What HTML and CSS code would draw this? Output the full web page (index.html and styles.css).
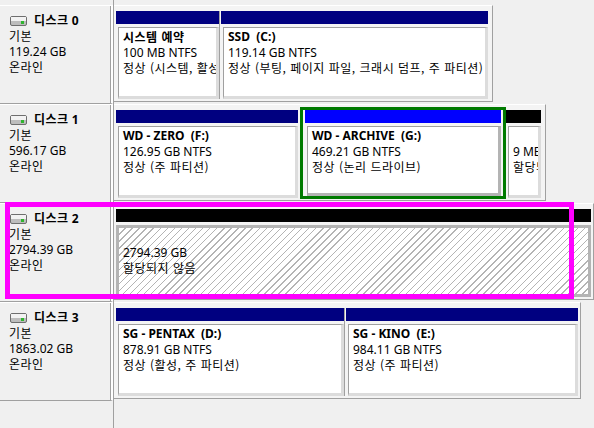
FILE: index.html
```html
<!DOCTYPE html>
<html lang="ko">
<head>
  <meta charset="UTF-8">
  <title>디스크 관리</title>
  <link rel="stylesheet" href="styles.css">
</head>
<body>
  <svg width="0" height="0" class="defs">
    <symbol id="disk-icon" viewBox="0 0 17 10">
      <rect x="0.5" y="0.5" width="16" height="9" rx="1.5" fill="#bdbdbd" stroke="#6e6e6e"/>
      <rect x="1" y="1" width="15" height="4" fill="#f2f2f2"/>
      <rect x="11" y="5" width="3" height="3" fill="#2fb52f"/>
    </symbol>
  </svg>

  <div class="disk-list">

    <!-- 디스크 0 -->
    <div class="disk">
      <div class="disk-info">
        <div class="disk-name"><svg class="disk-icon"><use href="#disk-icon"/></svg><span class="ko">디스크</span> 0</div>
        <div class="ko">기본</div>
        <div>119.24 GB</div>
        <div class="ko">온라인</div>
      </div>
      <div class="volumes wide-end">
        <div class="volume" style="width: 103px">
          <div class="volume-bar primary"></div>
          <div class="volume-body">
            <div class="volume-name ko">시스템 예약</div>
            <div>100 MB NTFS</div>
            <div class="ko">정상 (시스템, 활성, 주 파티션)</div>
          </div>
        </div>
        <div class="volume" style="width: 267px">
          <div class="volume-bar primary"></div>
          <div class="volume-body">
            <div class="volume-name">SSD  (C:)</div>
            <div>119.14 GB NTFS</div>
            <div class="ko">정상 (부팅, 페이지 파일, 크래시 덤프, 주 파티션)</div>
          </div>
        </div>
      </div>
    </div>

    <!-- 디스크 1 -->
    <div class="disk">
      <div class="disk-info">
        <div class="disk-name"><svg class="disk-icon"><use href="#disk-icon"/></svg><span class="ko">디스크</span> 1</div>
        <div class="ko">기본</div>
        <div>596.17 GB</div>
        <div class="ko">온라인</div>
      </div>
      <div class="volumes wide-end">
        <div class="volume" style="width: 182px">
          <div class="volume-bar primary"></div>
          <div class="volume-body">
            <div class="volume-name">WD - ZERO  (F:)</div>
            <div>126.95 GB NTFS</div>
            <div class="ko">정상 (주 파티션)</div>
          </div>
        </div>
        <div class="volume selected" style="width: 206px">
          <div class="volume-bar logical"></div>
          <div class="volume-body">
            <div class="volume-name">WD - ARCHIVE  (G:)</div>
            <div>469.21 GB NTFS</div>
            <div class="ko">정상 (논리 드라이브)</div>
          </div>
        </div>
        <div class="volume" style="width: 35px">
          <div class="volume-bar free"></div>
          <div class="volume-body">
            <div class="volume-name"> </div>
            <div>9 MB</div>
            <div class="ko">할당되지 않음</div>
          </div>
        </div>
      </div>
    </div>

    <!-- 디스크 2 -->
    <div class="disk">
      <div class="disk-info">
        <div class="disk-name"><svg class="disk-icon"><use href="#disk-icon"/></svg><span class="ko">디스크</span> 2</div>
        <div class="ko">기본</div>
        <div>2794.39 GB</div>
        <div class="ko">온라인</div>
      </div>
      <div class="volumes">
        <div class="volume" style="width: 475px">
          <div class="volume-bar free"></div>
          <div class="volume-body unallocated">
            <div class="volume-name"> </div>
            <div>2794.39 GB</div>
            <div class="ko">할당되지 않음</div>
          </div>
        </div>
      </div>
      <div class="highlight"></div>
    </div>

    <!-- 디스크 3 -->
    <div class="disk">
      <div class="disk-info">
        <div class="disk-name"><svg class="disk-icon"><use href="#disk-icon"/></svg><span class="ko">디스크</span> 3</div>
        <div class="ko">기본</div>
        <div>1863.02 GB</div>
        <div class="ko">온라인</div>
      </div>
      <div class="volumes">
        <div class="volume" style="width: 228px">
          <div class="volume-bar primary"></div>
          <div class="volume-body">
            <div class="volume-name">SG - PENTAX  (D:)</div>
            <div>878.91 GB NTFS</div>
            <div class="ko">정상 (활성, 주 파티션)</div>
          </div>
        </div>
        <div class="volume" style="width: 232px">
          <div class="volume-bar primary"></div>
          <div class="volume-body">
            <div class="volume-name">SG - KINO  (E:)</div>
            <div>984.11 GB NTFS</div>
            <div class="ko">정상 (주 파티션)</div>
          </div>
        </div>
      </div>
    </div>

  </div>
</body>
</html>
```

FILE: styles.css
```css
body {
  margin: 0;
  background-color: #f0f0f0;
  font-family: "Noto Sans", "Noto Sans CJK KR", sans-serif;
  font-size: 12px;
  line-height: 15.5px;
  color: #000;
}

/* hangul lines use the CJK face directly */
.ko {
  font-family: "Noto Sans CJK KR", "Noto Sans", sans-serif;
  letter-spacing: 0.5px;
}

.defs {
  position: absolute;
}

/* splitter line between the label pane and the volumes */
.disk-list {
  box-sizing: border-box;
  min-height: 100vh;
  padding-top: 5px;
  background: linear-gradient(to right, transparent 113px, #a0a0a0 113px, #a0a0a0 114px, transparent 114px);
}

.disk {
  position: relative;
  display: flex;
  align-items: flex-start;
  height: 99px;
}

.disk-info {
  box-sizing: border-box;
  width: 113px;
  height: 99px;
  padding: 6px 0 0 9px;
  border-top: 1px solid #fff;
  border-right: 2px solid #fff;
  border-bottom: 1px solid #a0a0a0;
  box-shadow: inset -1px 0 #a0a0a0;
  background-color: #f0f0f0;
  white-space: nowrap;
  overflow: hidden;
}

.disk-name {
  height: 16px;
  line-height: 16px;
  font-weight: bold;
}

.disk-icon {
  width: 17px;
  height: 10px;
  margin: 0 7px 0 1px;
  vertical-align: -1px;
}

.volumes {
  box-sizing: border-box;
  display: flex;
  height: 97px;
  margin-left: 1px;
  padding: 5px 2px 2px 2px;
  border: 1px solid #a0a0a0;
  border-top-color: #fff;
  border-left: none;
  background-color: #f4f4f4;
}

.volumes.wide-end {
  padding-right: 4px;
}

.volume {
  flex: none;
  display: flex;
  flex-direction: column;
  box-sizing: border-box;
  min-width: 0;
}

.volume + .volume {
  border-left: 1px solid #a0a0a0;
  padding-left: 1px;
  box-sizing: content-box;
}

.volume.selected {
  box-sizing: border-box;
  margin: -3px 0 -1px 2px;
  padding: 0 2px;
  border: 3px solid #007a00;
}

.volume.selected + .volume {
  border-left: none;
  padding-left: 0;
}

.volume-bar {
  height: 13px;
  flex: none;
}

.volume-bar.primary {
  background-color: #000080;
}

.volume-bar.logical {
  background-color: #0000ff;
}

.volume-bar.free {
  background-color: #000;
}

.volume-body {
  flex: 1;
  min-height: 0;
  margin: 3px 0 0 2px;
  padding: 1px 0 0 4px;
  border-top: 1px solid #a0a0a0;
  border-left: 1px solid #a0a0a0;
  border-right: 3px solid #dcdcdc;
  border-bottom: 3px solid #dcdcdc;
  background-color: #fff;
  white-space: nowrap;
  overflow: hidden;
}

.selected .volume-body {
  border-right-color: #b4b4b4;
  border-bottom-color: #b4b4b4;
}

.volume-name {
  font-weight: bold;
  white-space: pre;
}

.volume-body.unallocated {
  margin-left: 0;
  padding-left: 4px;
  border: 3px solid #b4b4b4;
  background: repeating-linear-gradient(135deg, #fff 0, #fff 4px, #b4b4b4 4px, #b4b4b4 5px);
}

/* magenta marker drawn over disk 2 */
.highlight {
  position: absolute;
  left: 5px;
  top: -1px;
  box-sizing: border-box;
  width: 569px;
  height: 97px;
  border: 5px solid #ff00ff;
  pointer-events: none;
}
```
